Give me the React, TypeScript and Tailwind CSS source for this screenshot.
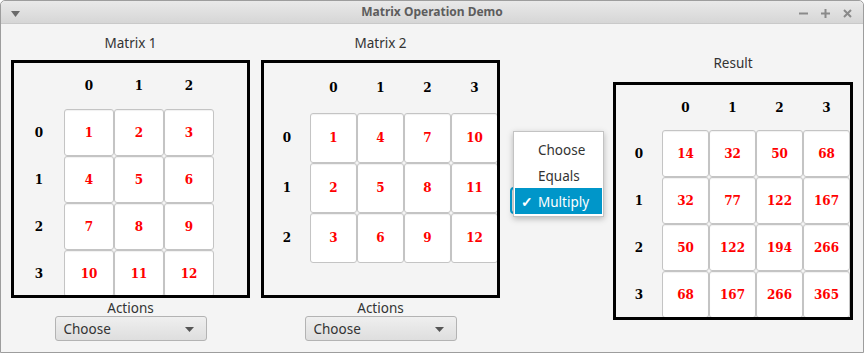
const sans = "font-['Noto_Sans',_'Open_Sans',_sans-serif]";
const serif = "font-['DejaVu_Serif',_'Liberation_Serif',_serif]";

const matrix1 = [
  [1, 2, 3],
  [4, 5, 6],
  [7, 8, 9],
  [10, 11, 12],
];

const matrix2 = [
  [1, 4, 7, 10],
  [2, 5, 8, 11],
  [3, 6, 9, 12],
];

const result = [
  [14, 32, 50, 68],
  [32, 77, 122, 167],
  [50, 122, 194, 266],
  [68, 167, 266, 365],
];

function MatrixGrid({
  data,
  gridClass,
  boxClass,
}: {
  data: number[][];
  gridClass: string;
  boxClass: string;
}) {
  const cols = data[0].length;

  return (
    <div className={`h-[238px] overflow-hidden border-[3px] border-black ${boxClass}`}>
      <div className={`grid ${gridClass} ${serif} text-[12px] font-bold`}>
        <div />
        {Array.from({ length: cols }, (_, c) => (
          <div key={c} className="flex items-center justify-center text-black">
            {c}
          </div>
        ))}
        {data.map((row, r) => (
          <div key={r} className="contents">
            <div className="flex items-center justify-center text-black">{r}</div>
            {row.map((value, c) => (
              <div
                key={c}
                className="flex items-center justify-center rounded-[3px] border border-[#c4c4c4] bg-white text-[#ff0000] shadow-[inset_0_1px_1px_rgba(0,0,0,0.06)]"
              >
                {value}
              </div>
            ))}
          </div>
        ))}
      </div>
    </div>
  );
}

function ComboBox() {
  return (
    <div className="flex h-[25px] w-[152px] items-center justify-between rounded-[3px] border border-[#b3b3b3] bg-gradient-to-b from-[#efefef] to-[#dedede] pl-[8px] pr-[12px] pt-[1px] text-[13.5px] text-[#333]">
      <span>Choose</span>
      <svg width="9" height="5" viewBox="0 0 9 5">
        <path d="M0 0h9L4.5 5z" fill="#555" />
      </svg>
    </div>
  );
}

function MatrixColumn({
  title,
  children,
}: {
  title: string;
  children: React.ReactNode;
}) {
  return (
    <div className="flex w-[239px] flex-col items-center pt-[10px]">
      <p className="h-[18px] leading-[18px] text-[#333]">{title}</p>
      <div className="mt-[8px]">{children}</div>
      <p className="mt-[1px] h-[17px] pt-[1px] leading-[17px] text-[#333]">Actions</p>
      <ComboBox />
    </div>
  );
}

function TitleBar() {
  return (
    <div className="relative flex h-[23px] items-center justify-center rounded-t-[5px] border-b border-[#c9c9c9] bg-gradient-to-b from-[#e9e9e9] to-[#d6d6d6]">
      <svg className="absolute left-[10px] top-[10px]" width="9" height="6" viewBox="0 0 9 6">
        <path d="M0 0h9L4.5 6z" fill="#6a6a6a" />
      </svg>
      <span className="text-[12px] font-bold text-[#5d5d5d]">Matrix Operation Demo</span>
      <div className="absolute right-[11px] top-[8px] flex gap-[13px]">
        <svg width="9" height="9" viewBox="0 0 9 9">
          <path d="M0 4.5h9" stroke="#8a8a8a" strokeWidth="2" />
        </svg>
        <svg width="9" height="9" viewBox="0 0 9 9">
          <path d="M0 4.5h9M4.5 0v9" stroke="#8a8a8a" strokeWidth="2" />
        </svg>
        <svg width="9" height="9" viewBox="0 0 9 9">
          <path d="M1 1l7 7M8 1L1 8" stroke="#8a8a8a" strokeWidth="2" />
        </svg>
      </div>
    </div>
  );
}

function OperationPopup() {
  const items = ["Choose", "Equals", "Multiply"];

  return (
    <div className="relative w-[113px]">
      {/* combo underneath the open popup, only its focus ring peeks out */}
      <div className="absolute left-[10px] top-[163px] h-[27px] w-[88px] rounded-[4px] border-2 border-[#039ed3] bg-[#e4e4e4]" />
      <div className="absolute left-[13px] top-[107px] w-[91px] border border-[#c3c3c3] bg-white px-[1px] pb-[2px] pt-[4px] shadow-[0_2px_6px_rgba(0,0,0,0.25)]">
        {items.map((item) => {
          const selected = item === "Multiply";
          return (
            <div
              key={item}
              className={`relative h-[26px] pl-[23px] pt-[1px] text-[13.5px] leading-[26px] ${
                selected ? "bg-[#0096c9] text-white" : "text-[#333]"
              }`}
            >
              {selected && <span className="absolute left-[6px] top-[1px] font-bold">✓</span>}
              {item}
            </div>
          );
        })}
      </div>
    </div>
  );
}

export default function App() {
  return (
    <div className={`h-[353px] w-[864px] overflow-hidden bg-white ${sans}`}>
      <div className="flex h-[353px] flex-col rounded-t-[5px] border border-[#9d9d9d] bg-[#f4f4f4] text-[13.5px]">
        <TitleBar />
        <div className="flex pl-[10px]">
          <MatrixColumn title="Matrix 1">
            <MatrixGrid
              data={matrix1}
              boxClass="w-[239px]"
              gridClass="grid-cols-[50px_50px_50px_50px] grid-rows-[46px_47px_47px_47px_47px]"
            />
          </MatrixColumn>
          <div className="ml-[11px]">
            <MatrixColumn title="Matrix 2">
              <MatrixGrid
                data={matrix2}
                boxClass="w-[239px]"
                gridClass="grid-cols-[46px_47px_47px_47px_47px] grid-rows-[50px_50px_50px_50px]"
              />
            </MatrixColumn>
          </div>
          <OperationPopup />
          <div className="flex w-[240px] flex-col items-center pt-[30px]">
            <p className="h-[18px] leading-[18px] text-[#333]">Result</p>
            <div className="mt-[10px]">
              <MatrixGrid
                data={result}
                boxClass="w-[240px]"
                gridClass="grid-cols-[46px_47px_47px_47px_47px] grid-rows-[45px_47px_47px_47px_47px]"
              />
            </div>
          </div>
        </div>
      </div>
    </div>
  );
}
